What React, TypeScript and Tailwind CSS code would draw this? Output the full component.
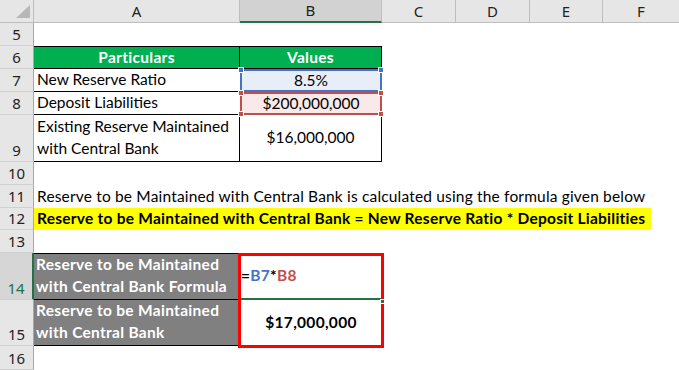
import React from "react";

function RowHead({ n, h, active }: { n: number; h: string; active?: boolean }) {
  return (
    <div
      className={`w-[34px] shrink-0 ${h} flex items-end justify-center pb-[1px] border-b border-[#d0d0d0] font-['Noto_Sans',sans-serif] text-[15px] leading-[20px] ${
        active ? "bg-[#d6d6d6] text-[#217346] border-r-2 border-r-[#217346]" : "bg-[#e6e6e6] text-[#222] border-r border-r-[#a8a8a8]"
      }`}
    >
      {n}
    </div>
  );
}

function Handle({ pos, color }: { pos: string; color: string }) {
  return <span className={`absolute ${pos} ${color} w-[6px] h-[6px] border border-white z-10`} />;
}

export default function App() {
  return (
    <div className="w-[679px] h-[370px] overflow-hidden bg-white relative font-['Lato',sans-serif] text-[15.5px] text-black">
      {/* column headers */}
      <div className="flex h-[23px] bg-[#e6e6e6] font-['Noto_Sans',sans-serif] text-[15px] text-[#222]">
        <div className="w-[34px] shrink-0 border-r border-b border-[#bdbdbd] relative">
          <svg className="absolute right-[2px] bottom-[3px]" width="16" height="15" viewBox="0 0 16 15">
            <polygon points="15,1 15,14 1,14" fill="#b7b7b7" />
          </svg>
        </div>
        <div className="w-[206px] shrink-0 flex items-center justify-center border-r border-b border-[#bdbdbd]">A</div>
        <div className="w-[142px] shrink-0 flex items-center justify-center bg-[#d2d2d2] border-r border-[#bdbdbd] border-b-2 border-b-[#217346]">B</div>
        <div className="w-[74px] shrink-0 flex items-center justify-center border-r border-b border-[#bdbdbd]">C</div>
        <div className="w-[74px] shrink-0 flex items-center justify-center border-r border-b border-[#bdbdbd]">D</div>
        <div className="w-[73px] shrink-0 flex items-center justify-center border-r border-b border-[#bdbdbd]">E</div>
        <div className="w-[76px] shrink-0 flex items-center justify-center border-b border-[#bdbdbd]">F</div>
      </div>

      {/* row 5 */}
      <div className="flex">
        <RowHead n={5} h="h-[23px]" />
      </div>

      {/* row 6 */}
      <div className="flex h-[23px]">
        <RowHead n={6} h="h-[23px]" />
        <div className="w-[206px] shrink-0 bg-[#00b050] text-white font-bold tracking-[0.3px] flex items-center justify-center border-y border-r border-black">
          Particulars
        </div>
        <div className="w-[142px] shrink-0 bg-[#00b050] text-white font-bold tracking-[0.3px] flex items-center justify-center border-y border-r border-black">
          Values
        </div>
      </div>

      {/* row 7 */}
      <div className="flex h-[23px]">
        <RowHead n={7} h="h-[23px]" />
        <div className="w-[206px] shrink-0 flex items-center px-[3px] border-b border-black">New Reserve Ratio</div>
        <div className="w-[142px] shrink-0 relative flex items-center justify-center bg-[#e8eef8] border-2 border-[#4472c4]">
          8.5%
          <Handle pos="-left-[4px] -top-[4px]" color="bg-[#4472c4]" />
          <Handle pos="-right-[4px] -top-[4px]" color="bg-[#4472c4]" />
        </div>
      </div>

      {/* row 8 */}
      <div className="flex h-[23px]">
        <RowHead n={8} h="h-[23px]" />
        <div className="w-[206px] shrink-0 flex items-center px-[3px] border-b border-black">Deposit Liabilities</div>
        <div className="w-[142px] shrink-0 relative flex items-center justify-center bg-[#f9e9e9] border-2 border-[#c0504d]">
          $200,000,000
          <Handle pos="-left-[4px] -top-[4px]" color="bg-[#c0504d]" />
          <Handle pos="-right-[4px] -top-[4px]" color="bg-[#c0504d]" />
          <Handle pos="-left-[4px] -bottom-[4px]" color="bg-[#c0504d]" />
          <Handle pos="-right-[4px] -bottom-[4px]" color="bg-[#c0504d]" />
        </div>
      </div>

      {/* row 9 */}
      <div className="flex h-[47px]">
        <RowHead n={9} h="h-[47px]" />
        <div className="w-[206px] shrink-0 flex items-end px-[3px] pb-[2px] leading-[22px] border-b border-r border-black">
          Existing Reserve Maintained with Central Bank
        </div>
        <div className="w-[142px] shrink-0 flex items-center justify-center border-b border-r border-black">$16,000,000</div>
      </div>

      {/* row 10 */}
      <div className="flex">
        <RowHead n={10} h="h-[23px]" />
      </div>

      {/* row 11 */}
      <div className="flex h-[23px]">
        <RowHead n={11} h="h-[23px]" />
        <div className="flex items-center px-[3px] whitespace-nowrap tracking-[0.17px]">
          Reserve to be Maintained with Central Bank is calculated using the formula given below
        </div>
      </div>

      {/* row 12 */}
      <div className="flex h-[22px]">
        <RowHead n={12} h="h-[22px]" />
        <div className="w-[617px] shrink-0 bg-[#ffff00] font-bold tracking-[0.25px] flex items-center px-[3px] whitespace-nowrap">
          Reserve to be Maintained with Central Bank = New Reserve Ratio * Deposit Liabilities
        </div>
      </div>

      {/* row 13 */}
      <div className="flex">
        <RowHead n={13} h="h-[23px]" />
      </div>

      {/* row 14 */}
      <div className="flex h-[47px]">
        <RowHead n={14} h="h-[47px]" active />
        <div className="w-[206px] shrink-0 bg-[#808080] text-white font-bold tracking-[0.3px] flex items-end px-[2px] pb-[2px] leading-[22px] border-y border-r border-black">
          Reserve to be Maintained with Central Bank Formula
        </div>
        <div className="w-[142px] shrink-0 flex items-center px-[1px] font-bold tracking-[0.3px] border-b-2 border-[#217346]">
          <span>=</span>
          <span className="text-[#4472c4]">B7</span>
          <span>*</span>
          <span className="text-[#c0504d]">B8</span>
        </div>
      </div>

      {/* row 15 */}
      <div className="flex h-[46px]">
        <RowHead n={15} h="h-[46px]" />
        <div className="w-[206px] shrink-0 bg-[#808080] text-white font-bold tracking-[0.3px] flex items-end px-[2px] pb-[2px] leading-[22px] border-b border-r border-black">
          Reserve to be Maintained with Central Bank
        </div>
        <div className="w-[142px] shrink-0 flex items-center justify-center font-bold tracking-[0.3px]">$17,000,000</div>
      </div>

      {/* row 16 */}
      <div className="flex">
        <RowHead n={16} h="h-[24px]" />
      </div>

      {/* red annotation box over B14:B15 */}
      <div className="absolute left-[238px] top-[253px] w-[146px] h-[95px] border-[3px] border-[#ff0000] pointer-events-none" />
      <span className="absolute left-[380px] top-[299px] w-[5px] h-[5px] bg-[#217346] border border-white" />
    </div>
  );
}
